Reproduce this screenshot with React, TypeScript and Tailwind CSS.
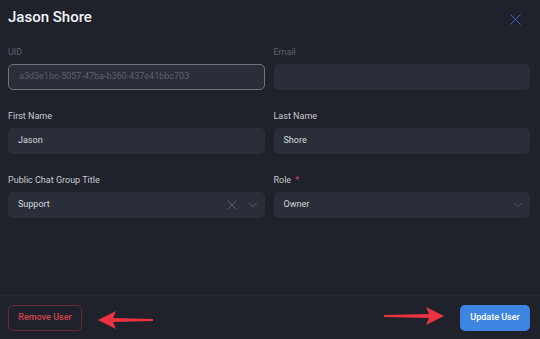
import { X, ChevronDown } from 'lucide-react'

type FieldProps = {
  label: string
  required?: boolean
  dim?: boolean
  children: React.ReactNode
}

function Field({ label, required, dim, children }: FieldProps) {
  return (
    <div className="flex flex-col gap-1">
      <label className={`text-[9px] leading-4 ${dim ? 'text-[#5d616b]' : 'text-[#c9cbd1]'}`}>
        {label}
        {required && <span className="ml-1 text-[#e0444e]">*</span>}
      </label>
      {children}
    </div>
  )
}

const inputBox = 'flex h-[26px] items-center rounded-[5px] bg-[#2a2e39] px-[10px] text-[9px]'

export default function App() {
  return (
    <div
      className="relative flex h-[339px] w-[540px] flex-col bg-[#1f222b] text-white"
      style={{ fontFamily: 'Roboto, "Liberation Sans", sans-serif' }}
    >
      <div className="flex items-start justify-between pl-2 pr-[15px] pt-[5px]">
        <h1 className="text-[15px] leading-6 font-medium text-[#f3f4f6]">Jason Shore</h1>
        <button type="button" className="mt-[5px] text-[#4a5fcc]">
          <X size={19} strokeWidth={1.2} />
        </button>
      </div>

      <div className="mt-[15px] grid grid-cols-2 gap-x-[9px] gap-y-[18px] pl-2 pr-[10px]">
        <Field label="UID" dim>
          <div className={`${inputBox} border border-[#6e737d] text-[#5d616b]`}>
            a3d3e1bc-5057-47ba-b360-437e41bbc703
          </div>
        </Field>
        <Field label="Email" dim>
          <div className={inputBox} />
        </Field>

        <Field label="First Name">
          <div className={`${inputBox} text-[#d6d8dd]`}>Jason</div>
        </Field>
        <Field label="Last Name">
          <div className={`${inputBox} text-[#d6d8dd]`}>Shore</div>
        </Field>

        <Field label="Public Chat Group Title">
          <div className={`${inputBox} justify-between pr-[5px] text-[#d6d8dd]`}>
            <span>Support</span>
            <div className="flex items-center gap-[6px] text-[#6e737d]">
              <X size={16} strokeWidth={1.1} />
              <ChevronDown size={14} strokeWidth={1.1} />
            </div>
          </div>
        </Field>
        <Field label="Role" required>
          <div className={`${inputBox} justify-between pr-[5px] text-[#d6d8dd]`}>
            <span>Owner</span>
            <ChevronDown size={14} strokeWidth={1.1} className="text-[#6e737d]" />
          </div>
        </Field>
      </div>

      <div className="mt-auto flex items-center justify-between border-t border-[#252832] pb-2 pl-2 pr-[10px] pt-[9px]">
        <button
          type="button"
          className="h-[26px] w-[74px] rounded-[5px] border border-[#6b2a31] text-[9px] font-medium text-[#d2434e]"
        >
          Remove User
        </button>
        <button
          type="button"
          className="h-[26px] w-[70px] rounded-[5px] bg-[#3d85e0] text-[9px] font-medium text-white"
        >
          Update User
        </button>
      </div>

      <svg className="absolute left-[98px] top-[310px]" width="58" height="20" viewBox="0 0 58 20">
        <path d="M0 10 L18 1 L15 8 L55 9 L55 11 L15 12 L18 19 Z" fill="#ee3340" />
      </svg>
      <svg className="absolute left-[382px] top-[306px]" width="64" height="20" viewBox="0 0 64 20">
        <path d="M62 10 L44 1 L47 8 L2 9 L2 11 L47 12 L44 19 Z" fill="#ee3340" />
      </svg>
    </div>
  )
}
